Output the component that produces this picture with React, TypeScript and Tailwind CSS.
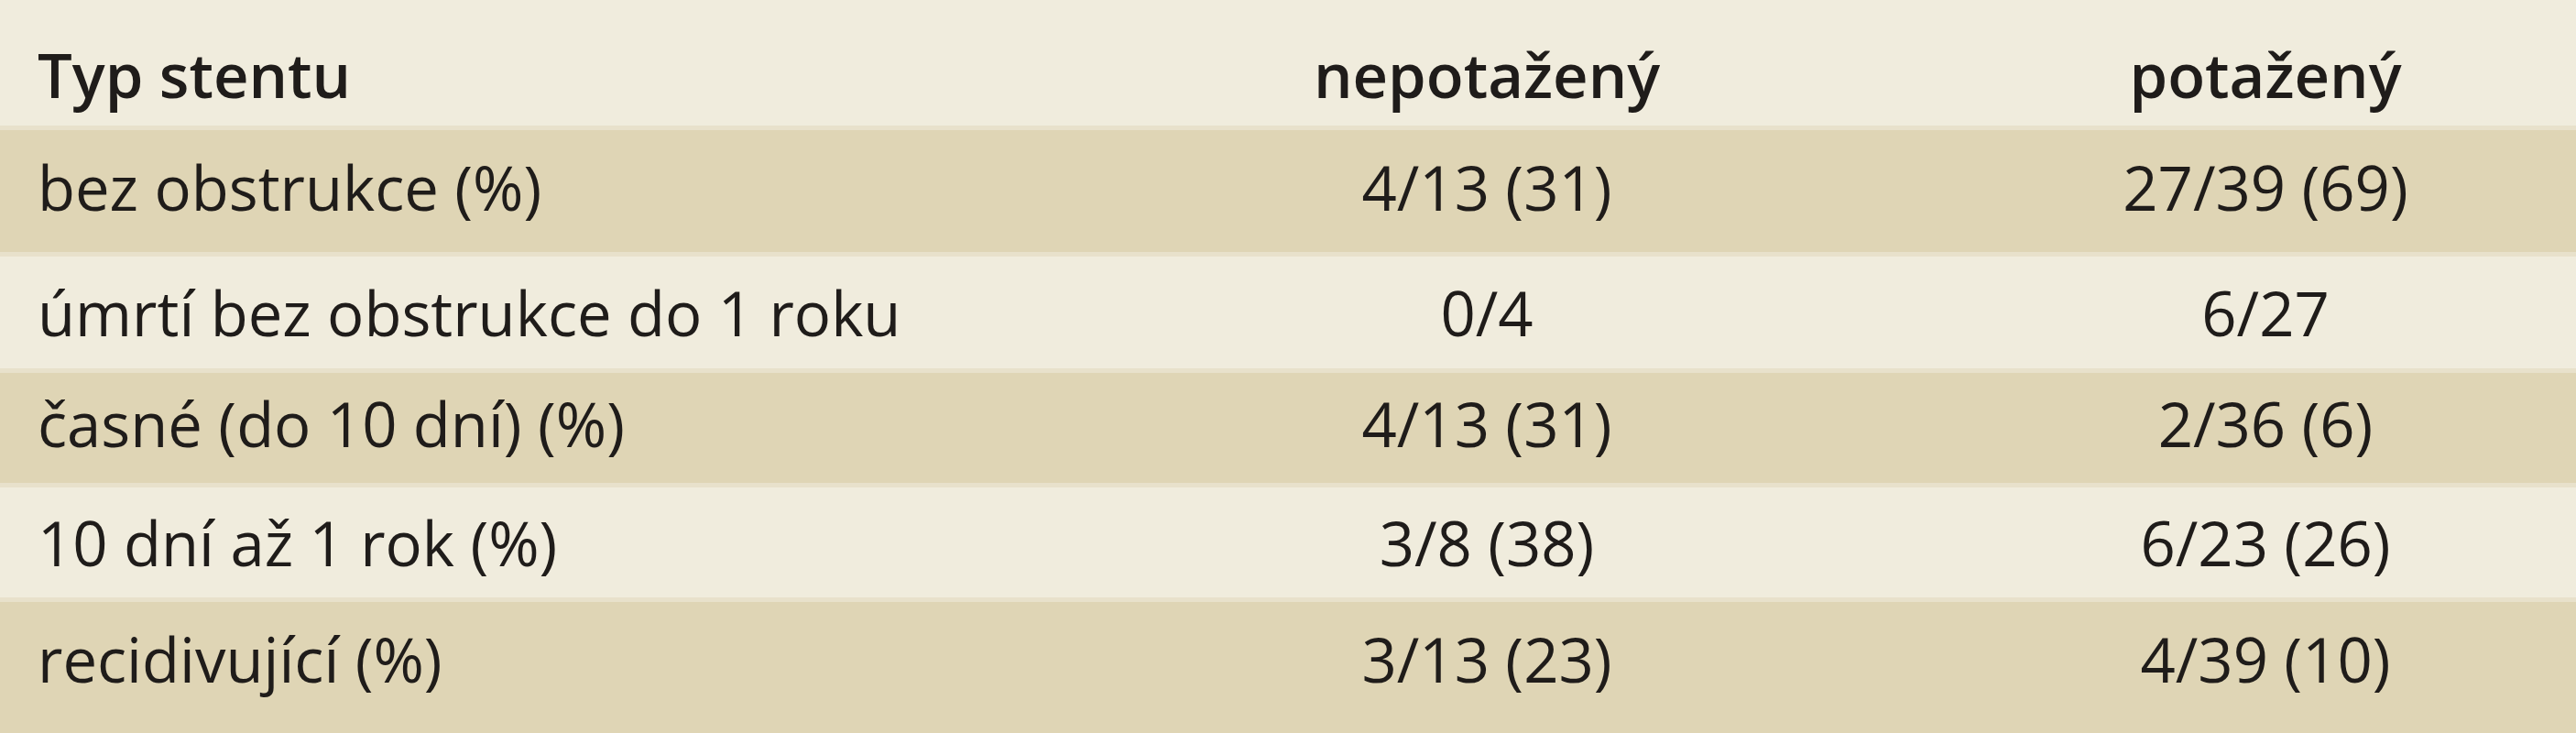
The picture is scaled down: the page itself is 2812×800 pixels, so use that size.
const rows = [
  { label: "bez obstrukce (%)", a: "4/13 (31)", b: "27/39 (69)", cls: "h-[138px] pt-[29px] bg-[#dfd5b5]" },
  { label: "úmrtí bez obstrukce do 1 roku", a: "0/4", b: "6/27", cls: "h-[127px] pt-[28px] bg-[#f0ecdd]" },
  { label: "časné (do 10 dní) (%)", a: "4/13 (31)", b: "2/36 (6)", cls: "h-[125px] pt-[22px] bg-[#dfd5b5]" },
  { label: "10 dní až 1 rok (%)", a: "3/8 (38)", b: "6/23 (26)", cls: "h-[125px] pt-[27px] bg-[#f0ecdd]" },
  { label: "recidivující (%)", a: "3/13 (23)", b: "4/39 (10)", cls: "h-[148px] pt-[29px] bg-[#dfd5b5]" },
];

export default function App() {
  return (
    <div className="w-[2812px] h-[800px] bg-[#f0ecdd] text-[#1f1c1a] text-[67px] leading-none font-['Open_Sans',sans-serif]">
      <div className="grid grid-cols-[1112px_1022px_1fr] h-[137px] pt-[48px] font-semibold">
        <div className="pl-[41px]">Typ stentu</div>
        <div className="text-center">nepotažený</div>
        <div className="text-center">potažený</div>
      </div>
      {rows.map((r) => (
        <div key={r.label} className={"grid grid-cols-[1112px_1022px_1fr] border-t-[5px] border-[#e8e1cb] " + r.cls}>
          <div className="pl-[41px]">{r.label}</div>
          <div className="text-center">{r.a}</div>
          <div className="text-center">{r.b}</div>
        </div>
      ))}
    </div>
  );
}
